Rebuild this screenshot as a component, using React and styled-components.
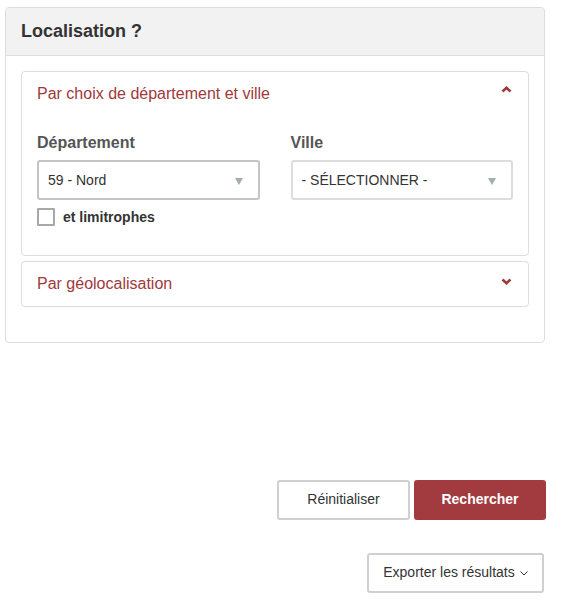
import React from 'react'
import styled, { createGlobalStyle } from 'styled-components'

const Global = createGlobalStyle`
  body {
    margin: 0;
    background: #fff;
    font-family: "Liberation Sans", Arial, sans-serif;
    color: #333;
  }
`

const Page = styled.div`
  padding: 7px 0 0 5px;
`

const Panel = styled.section`
  width: 540px;
  box-sizing: border-box;
  border: 1px solid #ddd;
  border-radius: 4px;
  background: #fff;
`

const PanelHeader = styled.div`
  height: 48px;
  box-sizing: border-box;
  padding: 0 15px;
  display: flex;
  align-items: center;
  background: #f2f2f2;
  border-bottom: 1px solid #ddd;
  border-radius: 3px 3px 0 0;
  h2 {
    margin: 0;
    font-size: 18px;
    font-weight: bold;
    color: #333;
  }
`

const PanelBody = styled.div`
  padding: 15px 15px 35px;
  display: flex;
  flex-direction: column;
  gap: 5px;
`

const Accordion = styled.div`
  border: 1px solid #ddd;
  border-radius: 4px;
`

const AccordionHead = styled.div`
  height: 44px;
  box-sizing: border-box;
  padding: 0 15px;
  display: flex;
  align-items: center;
  justify-content: space-between;
  font-size: 16px;
  color: #a0393b;
  svg {
    margin-right: 1px;
    margin-top: ${p => (p.$open ? '-9px' : '-6px')};
  }
`

const AccordionBody = styled.div`
  padding: 17px 15px 29px;
`

const Columns = styled.div`
  display: grid;
  grid-template-columns: 1fr 1fr;
  column-gap: 31px;
`

const Field = styled.div`
  display: flex;
  flex-direction: column;
`

const Label = styled.label`
  font-size: 16px;
  line-height: 20px;
  font-weight: bold;
  color: #555;
  margin-bottom: 7px;
`

const Select = styled.div`
  height: 40px;
  box-sizing: border-box;
  border: 2px solid ${p => (p.$active ? '#c4c4c4' : '#ddd')};
  border-radius: 3px;
  padding: 0 15px 0 9px;
  display: flex;
  align-items: center;
  justify-content: space-between;
  font-size: 14px;
  color: #333;
`

const Caret = styled.span`
  width: 0;
  height: 0;
  border-left: 4px solid transparent;
  border-right: 4px solid transparent;
  border-top: 7px solid #a3adb3;
  margin-top: 2px;
`

const CheckRow = styled.label`
  display: flex;
  align-items: center;
  gap: 8px;
  margin-top: 8px;
  font-size: 14px;
  font-weight: bold;
  color: #333;
  height: 18px;
`

const Box = styled.span`
  width: 18px;
  height: 18px;
  box-sizing: border-box;
  border: 2px solid #a8a8a8;
  border-radius: 1px;
  background: #fff;
`

const Actions = styled.div`
  width: 541px;
  margin-top: 137px;
  display: flex;
  justify-content: flex-end;
  gap: 4px;
`

const Button = styled.button`
  height: 40px;
  width: ${p => p.$w}px;
  box-sizing: border-box;
  border-radius: 3px;
  font-family: "Liberation Sans", Arial, sans-serif;
  font-size: 14px;
  padding: 0 0 2px;
  border: 2px solid ${p => (p.$primary ? '#a23b3f' : '#d0d0d0')};
  background: ${p => (p.$primary ? '#a23b3f' : '#fff')};
  color: ${p => (p.$primary ? '#fff' : '#333')};
  font-weight: ${p => (p.$primary ? 'bold' : 'normal')};
  display: inline-flex;
  align-items: center;
  justify-content: center;
  gap: 5px;
`

const ExportRow = styled.div`
  width: 539px;
  margin-top: 33px;
  display: flex;
  justify-content: flex-end;
`

function Chevron({ up }) {
  return (
    <svg width="11" height="7" viewBox="0 0 11 7">
      <polyline
        points={up ? '1.5,5.5 5.5,1.8 9.5,5.5' : '1.5,1.5 5.5,5.2 9.5,1.5'}
        fill="none"
        stroke="#a0393b"
        strokeWidth="2.6"
      />
    </svg>
  )
}

function SmallChevron() {
  return (
    <svg width="8" height="5" viewBox="0 0 8 5" style={{ marginTop: 2 }}>
      <polyline points="0.5,0.5 4,4 7.5,0.5" fill="none" stroke="#333" strokeWidth="1" />
    </svg>
  )
}

export default function App() {
  return (
    <Page>
      <Global />
      <Panel>
        <PanelHeader>
          <h2>Localisation ?</h2>
        </PanelHeader>
        <PanelBody>
          <Accordion>
            <AccordionHead $open>
              <span>Par choix de département et ville</span>
              <Chevron up />
            </AccordionHead>
            <AccordionBody>
              <Columns>
                <Field>
                  <Label>Département</Label>
                  <Select $active>
                    <span>59 - Nord</span>
                    <Caret />
                  </Select>
                </Field>
                <Field>
                  <Label>Ville</Label>
                  <Select>
                    <span>- SÉLECTIONNER -</span>
                    <Caret />
                  </Select>
                </Field>
              </Columns>
              <CheckRow>
                <Box />
                et limitrophes
              </CheckRow>
            </AccordionBody>
          </Accordion>
          <Accordion>
            <AccordionHead>
              <span>Par géolocalisation</span>
              <Chevron />
            </AccordionHead>
          </Accordion>
        </PanelBody>
      </Panel>
      <Actions>
        <Button $w={133}>Réinitialiser</Button>
        <Button $w={132} $primary>Rechercher</Button>
      </Actions>
      <ExportRow>
        <Button $w={177}>
          Exporter les résultats <SmallChevron />
        </Button>
      </ExportRow>
    </Page>
  )
}
